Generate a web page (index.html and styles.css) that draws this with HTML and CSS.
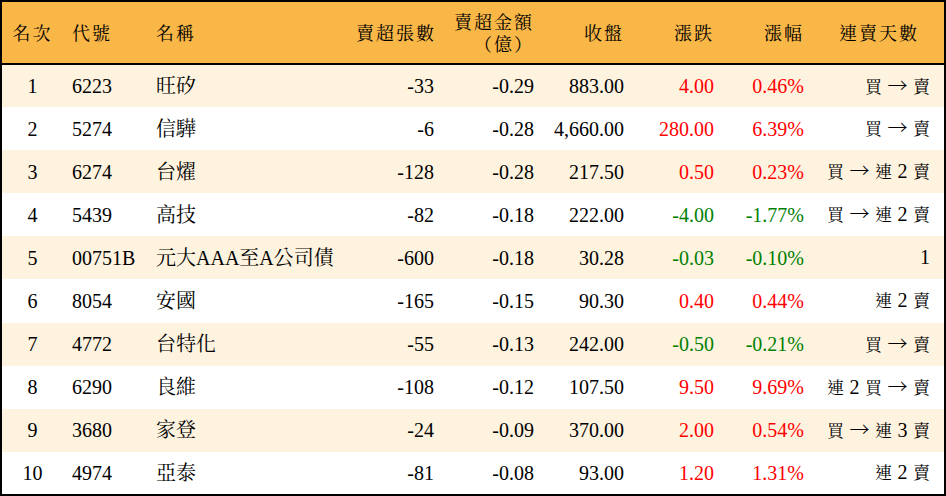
FILE: index.html
```html
<!DOCTYPE html>
<html lang="zh-Hant">
<head>
<meta charset="utf-8">
<title>賣超排行</title>
<link rel="stylesheet" href="styles.css">
</head>
<body>
<table class="rank">
  <colgroup>
    <col class="c-rank"><col class="c-code"><col class="c-name"><col class="c-vol"><col class="c-amt"><col class="c-close"><col class="c-chg"><col class="c-pct"><col class="c-days">
  </colgroup>
  <thead>
    <tr>
      <th class="ctr">名次</th>
      <th class="lft">代號</th>
      <th class="lft">名稱</th>
      <th class="rgt">賣超張數</th>
      <th class="rgt two">賣超金額<br>（億）</th>
      <th class="rgt">收盤</th>
      <th class="rgt">漲跌</th>
      <th class="rgt">漲幅</th>
      <th class="ctr">連賣天數</th>
    </tr>
  </thead>
  <tbody>
    <tr class="alt"><td class="ctr">1</td><td class="lft">6223</td><td class="lft">旺矽</td><td class="rgt">-33</td><td class="rgt">-0.29</td><td class="rgt">883.00</td><td class="rgt up">4.00</td><td class="rgt up">0.46%</td><td class="rgt days">買 <span class="arr">→</span> 賣</td></tr>
    <tr><td class="ctr">2</td><td class="lft">5274</td><td class="lft">信驊</td><td class="rgt">-6</td><td class="rgt">-0.28</td><td class="rgt">4,660.00</td><td class="rgt up">280.00</td><td class="rgt up">6.39%</td><td class="rgt days">買 <span class="arr">→</span> 賣</td></tr>
    <tr class="alt"><td class="ctr">3</td><td class="lft">6274</td><td class="lft">台燿</td><td class="rgt">-128</td><td class="rgt">-0.28</td><td class="rgt">217.50</td><td class="rgt up">0.50</td><td class="rgt up">0.23%</td><td class="rgt days">買 <span class="arr">→</span> 連 <span class="num">2</span> 賣</td></tr>
    <tr><td class="ctr">4</td><td class="lft">5439</td><td class="lft">高技</td><td class="rgt">-82</td><td class="rgt">-0.18</td><td class="rgt">222.00</td><td class="rgt down">-4.00</td><td class="rgt down">-1.77%</td><td class="rgt days">買 <span class="arr">→</span> 連 <span class="num">2</span> 賣</td></tr>
    <tr class="alt"><td class="ctr">5</td><td class="lft">00751B</td><td class="lft">元大AAA至A公司債</td><td class="rgt">-600</td><td class="rgt">-0.18</td><td class="rgt">30.28</td><td class="rgt down">-0.03</td><td class="rgt down">-0.10%</td><td class="rgt days"><span class="num">1</span></td></tr>
    <tr><td class="ctr">6</td><td class="lft">8054</td><td class="lft">安國</td><td class="rgt">-165</td><td class="rgt">-0.15</td><td class="rgt">90.30</td><td class="rgt up">0.40</td><td class="rgt up">0.44%</td><td class="rgt days">連 <span class="num">2</span> 賣</td></tr>
    <tr class="alt"><td class="ctr">7</td><td class="lft">4772</td><td class="lft">台特化</td><td class="rgt">-55</td><td class="rgt">-0.13</td><td class="rgt">242.00</td><td class="rgt down">-0.50</td><td class="rgt down">-0.21%</td><td class="rgt days">買 <span class="arr">→</span> 賣</td></tr>
    <tr><td class="ctr">8</td><td class="lft">6290</td><td class="lft">良維</td><td class="rgt">-108</td><td class="rgt">-0.12</td><td class="rgt">107.50</td><td class="rgt up">9.50</td><td class="rgt up">9.69%</td><td class="rgt days">連 <span class="num">2</span> 買 <span class="arr">→</span> 賣</td></tr>
    <tr class="alt"><td class="ctr">9</td><td class="lft">3680</td><td class="lft">家登</td><td class="rgt">-24</td><td class="rgt">-0.09</td><td class="rgt">370.00</td><td class="rgt up">2.00</td><td class="rgt up">0.54%</td><td class="rgt days">買 <span class="arr">→</span> 連 <span class="num">3</span> 賣</td></tr>
    <tr><td class="ctr">10</td><td class="lft">4974</td><td class="lft">亞泰</td><td class="rgt">-81</td><td class="rgt">-0.08</td><td class="rgt">93.00</td><td class="rgt up">1.20</td><td class="rgt up">1.31%</td><td class="rgt days">連 <span class="num">2</span> 賣</td></tr>
  </tbody>
</table>
</body>
</html>
```

FILE: styles.css
```css
html, body {
  margin: 0;
  padding: 0;
  background: #ffffff;
}

body {
  font-family: "Liberation Serif", "Noto Serif CJK TC", "Noto Sans CJK TC", serif;
  color: #000000;
}

.rank {
  width: 946px;
  border-collapse: collapse;
  table-layout: fixed;
  border: 2px solid #000000;
  box-sizing: border-box;
}

.c-rank { width: 62px; }
.c-code { width: 84px; }
.c-name { width: 200px; }
.c-vol { width: 97px; }
.c-amt { width: 100px; }
.c-close { width: 90px; }
.c-chg { width: 90px; }
.c-pct { width: 90px; }
.c-days { width: 131px; }

thead tr {
  background: #f9b748;
  height: 63px;
  border-bottom: 2px solid #000000;
}

th {
  font-weight: normal;
  font-size: 18px;
  letter-spacing: 2px;
  line-height: 22px;
  padding: 2px 10px 0 9px;
  vertical-align: middle;
  white-space: nowrap;
}

tbody tr {
  height: 43.1px;
  background: #ffffff;
}

tbody tr.alt {
  background: #fef3df;
}

td {
  font-size: 20px;
  line-height: 24px;
  padding: 0 10px 0 9px;
  vertical-align: middle;
  white-space: nowrap;
}

.ctr { text-align: center; padding-left: 0; padding-right: 0; }
.lft { text-align: left; }
.rgt { text-align: right; }

td.days {
  padding-right: 14px;
  font-size: 17px;
  word-spacing: 1.25px;
}

td.days .num {
  font-size: 20px;
}

td.days .arr {
  font-family: "Noto Sans CJK TC", sans-serif;
  font-size: 20px;
  font-weight: 300;
}

.up { color: #ff0000; }
.down { color: #008000; }
```
